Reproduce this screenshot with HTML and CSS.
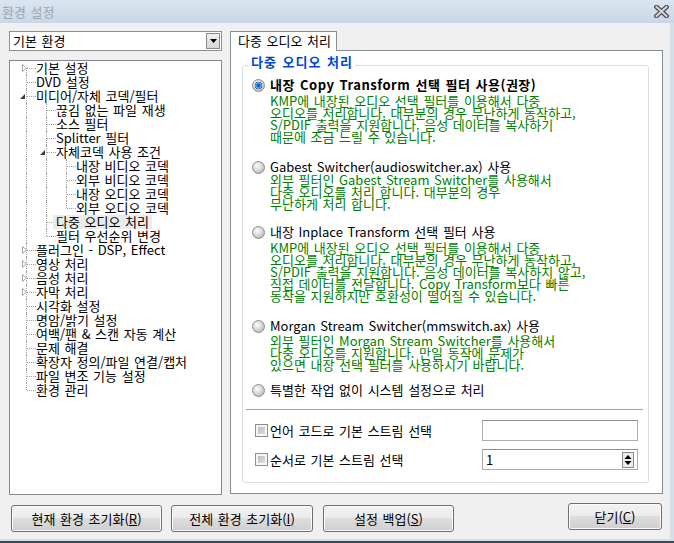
FILE: index.html
```html
<!DOCTYPE html>
<html lang="ko">
<head>
<meta charset="utf-8">
<title>환경 설정</title>
<link rel="stylesheet" href="styles.css">
</head>
<body>
<div class="window">
  <div class="titlebar">
    <span class="title">환경 설정</span>
    <svg class="close" width="15" height="13" viewBox="0 0 15 13"><path d="M2.5 2 L12.5 11 M12.5 2 L2.5 11" stroke="#505050" stroke-width="4.6" stroke-linecap="square"/><path d="M2.5 2 L12.5 11 M12.5 2 L2.5 11" stroke="#d6d6d6" stroke-width="2" stroke-linecap="square"/></svg>
  </div>
  <div class="client">
    <div class="main">
      <div class="leftcol">
        <div class="combo">
          <span>기본 환경</span>
          <span class="dd"><svg width="7" height="4" viewBox="0 0 7 4"><path d="M0 0 H7 L3.5 4 Z" fill="#000"/></svg></span>
        </div>
        <div class="tree">
          <div class="row"><span class="c first"><svg class="exp-c" width="5" height="8" viewBox="0 0 5 8"><path d="M0.5 0.5 L4.5 4 L0.5 7.5 Z" fill="#fff" stroke="#a6a6a6"/></svg></span><span class="lbl">기본 설정</span></div>
          <div class="row"><span class="c tee"></span><span class="lbl">DVD 설정</span></div>
          <div class="row"><span class="c tee"><svg class="exp-o" width="5" height="5" viewBox="0 0 5 5"><path d="M5 0 V5 H0 Z" fill="#3a3a3a"/></svg></span><span class="lbl">미디어/자체 코덱/필터</span></div>
          <div class="row"><span class="c pipe"></span><span class="c tee"></span><span class="lbl">끊김 없는 파일 재생</span></div>
          <div class="row"><span class="c pipe"></span><span class="c tee"></span><span class="lbl">소스 필터</span></div>
          <div class="row"><span class="c pipe"></span><span class="c tee"></span><span class="lbl">Splitter 필터</span></div>
          <div class="row"><span class="c pipe"></span><span class="c tee"><svg class="exp-o" width="5" height="5" viewBox="0 0 5 5"><path d="M5 0 V5 H0 Z" fill="#3a3a3a"/></svg></span><span class="lbl">자체코덱 사용 조건</span></div>
          <div class="row"><span class="c pipe"></span><span class="c pipe"></span><span class="c tee"></span><span class="lbl">내장 비디오 코덱</span></div>
          <div class="row"><span class="c pipe"></span><span class="c pipe"></span><span class="c tee"></span><span class="lbl">외부 비디오 코덱</span></div>
          <div class="row"><span class="c pipe"></span><span class="c pipe"></span><span class="c tee"></span><span class="lbl">내장 오디오 코덱</span></div>
          <div class="row"><span class="c pipe"></span><span class="c pipe"></span><span class="c ell"></span><span class="lbl">외부 오디오 코덱</span></div>
          <div class="row"><span class="c pipe"></span><span class="c tee"></span><span class="lbl sel">다중 오디오 처리</span></div>
          <div class="row"><span class="c pipe"></span><span class="c ell"></span><span class="lbl">필터 우선순위 변경</span></div>
          <div class="row"><span class="c tee"><svg class="exp-c" width="5" height="8" viewBox="0 0 5 8"><path d="M0.5 0.5 L4.5 4 L0.5 7.5 Z" fill="#fff" stroke="#a6a6a6"/></svg></span><span class="lbl">플러그인 - DSP, Effect</span></div>
          <div class="row"><span class="c tee"><svg class="exp-c" width="5" height="8" viewBox="0 0 5 8"><path d="M0.5 0.5 L4.5 4 L0.5 7.5 Z" fill="#fff" stroke="#a6a6a6"/></svg></span><span class="lbl">영상 처리</span></div>
          <div class="row"><span class="c tee"><svg class="exp-c" width="5" height="8" viewBox="0 0 5 8"><path d="M0.5 0.5 L4.5 4 L0.5 7.5 Z" fill="#fff" stroke="#a6a6a6"/></svg></span><span class="lbl">음성 처리</span></div>
          <div class="row"><span class="c tee"><svg class="exp-c" width="5" height="8" viewBox="0 0 5 8"><path d="M0.5 0.5 L4.5 4 L0.5 7.5 Z" fill="#fff" stroke="#a6a6a6"/></svg></span><span class="lbl">자막 처리</span></div>
          <div class="row"><span class="c tee"></span><span class="lbl">시각화 설정</span></div>
          <div class="row"><span class="c tee"></span><span class="lbl">명암/밝기 설정</span></div>
          <div class="row"><span class="c tee"></span><span class="lbl">여백/팬 &amp; 스캔 자동 계산</span></div>
          <div class="row"><span class="c tee"></span><span class="lbl">문제 해결</span></div>
          <div class="row"><span class="c tee"></span><span class="lbl">확장자 정의/파일 연결/캡처</span></div>
          <div class="row"><span class="c tee"></span><span class="lbl">파일 변조 기능 설정</span></div>
          <div class="row"><span class="c ell"></span><span class="lbl">환경 관리</span></div>
        </div>
      </div>
      <div class="rightcol">
        <div class="tabs"><div class="tab">다중 오디오 처리</div></div>
        <div class="panel">
          <div class="group">
            <span class="legend">다중 오디오 처리</span>
            <div class="opt"><span class="radio checked"></span><span class="lab bold">내장 Copy Transform 선택 필터 사용(권장)</span></div>
            <div class="desc d1"><div>KMP에 내장된 오디오 선택 필터를 이용해서 다중</div><div>오디오를 처리합니다. 대부분의 경우 무난하게 동작하고,</div><div>S/PDIF 출력을 지원합니다. 음성 데이터를 복사하기</div><div>때문에 조금 느릴 수 있습니다.</div></div>
            <div class="opt o2"><span class="radio"></span><span class="lab">Gabest Switcher(audioswitcher.ax) 사용</span></div>
            <div class="desc d2"><div>외부 필터인 Gabest Stream Switcher를 사용해서</div><div>다중 오디오를 처리 합니다. 대부분의 경우</div><div>무난하게 처리 합니다.</div></div>
            <div class="opt o3"><span class="radio"></span><span class="lab">내장 Inplace Transform 선택 필터 사용</span></div>
            <div class="desc d3"><div>KMP에 내장된 오디오 선택 필터를 이용해서 다중</div><div>오디오를 처리합니다. 대부분의 경우 무난하게 동작하고,</div><div>S/PDIF 출력을 지원합니다. 음성 데이터를 복사하지 않고,</div><div>직접 데이터를 전달합니다. Copy Transform보다 빠른</div><div>동작을 지원하지만 호환성이 떨어질 수 있습니다.</div></div>
            <div class="opt o4"><span class="radio"></span><span class="lab">Morgan Stream Switcher(mmswitch.ax) 사용</span></div>
            <div class="desc d4"><div>외부 필터인 Morgan Stream Switcher를 사용해서</div><div>다중 오디오를 지원합니다. 만일 동작에 문제가</div><div>있으면 내장 선택 필터를 사용하시기 바랍니다.</div></div>
            <div class="opt o5"><span class="radio"></span><span class="lab">특별한 작업 없이 시스템 설정으로 처리</span></div>
            <div class="sep"></div>
            <div class="chkrow"><span class="check"></span><span class="clab">언어 코드로 기본 스트림 선택</span><div class="edit"></div></div>
            <div class="chkrow c2"><span class="check"></span><span class="clab">순서로 기본 스트림 선택</span><div class="edit"><span>1</span><svg class="spin" width="12" height="16" viewBox="0 0 12 16"><rect x="0.5" y="0.5" width="11" height="15" fill="#ececec" stroke="#8a8a8a"/><path d="M2.5 7 L6 3 L9.5 7 Z" fill="#000"/><path d="M2.5 9 L6 13 L9.5 9 Z" fill="#000"/></svg></div></div>
          </div>
        </div>
      </div>
    </div>
    <div class="footer">
      <button class="btn b1">현재 환경 초기화(<u>R</u>)</button>
      <button class="btn b2">전체 환경 초기화(<u>I</u>)</button>
      <button class="btn b3">설정 백업(<u>S</u>)</button>
      <button class="btn b4">닫기(<u>C</u>)</button>
    </div>
  </div>
  <div class="bottomframe"></div>
</div>
</body>
</html>
```

FILE: styles.css
```css
* { box-sizing: border-box; }
html, body { margin: 0; padding: 0; }
body {
  width: 674px;
  height: 543px;
  overflow: hidden;
  font-family: "Noto Sans CJK KR", sans-serif;
  font-size: 13px;
  word-spacing: 1px;
  color: #000;
  background: #f0f0f0;
}
.window { width: 674px; height: 543px; display: flex; flex-direction: column; }
.titlebar {
  height: 23px;
  flex: none;
  background: linear-gradient(#dbe5f0, #c8d7e7);
  display: flex;
  align-items: center;
  justify-content: space-between;
  padding: 0 5px 0 2px;
}
.title { color: #9ca5af; line-height: 14px; }
.close { display: block; }
.client {
  flex: 1;
  display: flex;
  flex-direction: column;
  background: #f0f0f0;
  border-right: 4px solid #d5dfea;
}
.bottomframe { height: 4px; flex: none; background: #d5dfea; border-bottom: 2px solid #3e4854; }

.main { display: flex; margin: 8px 0 0 9px; height: 464px; }
.leftcol { width: 213px; display: flex; flex-direction: column; gap: 9px; }
.combo {
  height: 20px;
  border: 1px solid #8e8f8f;
  background: #fff;
  display: flex;
  align-items: center;
  justify-content: space-between;
  padding: 0 1px 0 3px;
  line-height: 14px;
}
.dd {
  width: 14px;
  height: 16px;
  border: 1px solid #8a8a8a;
  background: linear-gradient(#f0f0f0, #d6d6d6);
  display: flex;
  align-items: center;
  justify-content: center;
}
.dd svg { display: block; }
.tree {
  height: 435px;
  border: 1px solid #828790;
  background: #fff;
  padding: 0 0 0 6px;
}
.row { height: 14px; display: flex; align-items: center; }
.c { width: 20px; height: 14px; position: relative; flex: none; }
.c::before, .c::after { content: ""; position: absolute; }
.pipe::before, .tee::before { left: 10px; top: 0; bottom: 0; border-left: 1px dotted #a0a0a0; }
.ell::before { left: 10px; top: 0; height: 7px; border-left: 1px dotted #a0a0a0; }
.first::before { left: 10px; top: 7px; bottom: 0; border-left: 1px dotted #a0a0a0; }
.tee::after, .ell::after, .first::after { left: 11px; right: 0; top: 7px; border-top: 1px dotted #a0a0a0; }
.exp-c { position: absolute; left: 6px; top: 3px; z-index: 1; display: block; }
.exp-o { position: absolute; left: 4px; top: 5px; z-index: 1; display: block; }
.lbl { height: 14px; line-height: 14px; padding: 0 3px; margin-left: -3px; white-space: nowrap; position: relative; z-index: 1; }
.lbl.sel { background: #ebebeb; }

.rightcol { width: 433px; margin-left: 8px; display: flex; flex-direction: column; }
.tabs { display: flex; height: 20px; position: relative; z-index: 1; }
.tab {
  width: 107px;
  height: 20px;
  border: 1px solid #898c95;
  border-bottom: none;
  background: #fff;
  padding-left: 7px;
  line-height: 18px;
  white-space: nowrap;
}
.panel {
  height: 444px;
  margin-top: -1px;
  border: 1px solid #898c95;
  background: #fff;
  padding: 14px 13px 0 11px;
}
.group {
  height: 418px;
  border: 1px solid #d5dfe5;
  border-radius: 3px;
  position: relative;
  padding: 12px 0 0 0;
}
.legend {
  position: absolute;
  left: 6px;
  top: -11px;
  padding: 0 2px;
  background: #fff;
  color: #0046d5;
  font-weight: bold;
  letter-spacing: 1px;
  line-height: 14px;
}
.opt { height: 14px; display: flex; align-items: center; padding-left: 9px; }
.lab { margin-left: 5px; line-height: 14px; white-space: nowrap; }
.bold { font-weight: bold; letter-spacing: 0.5px; }
.radio {
  width: 13px;
  height: 13px;
  flex: none;
  border-radius: 50%;
  border: 1px solid #8b8b8b;
  background: radial-gradient(circle at 40% 35%, #fdfdfd 0, #e2e2e2 35%, #c2c2c2 70%, #dcdcdc 100%);
}
.radio.checked {
  background:
    radial-gradient(circle at 50% 50%, #0f3f86 0, #2a75c9 1.6px, #6fb3ee 2.8px, #2b6cb8 3.6px, rgba(0,0,0,0) 4.1px),
    radial-gradient(circle at 40% 35%, #fdfdfd 0, #e2e2e2 35%, #c2c2c2 70%, #dcdcdc 100%);
}
.desc { margin-left: 27px; color: #008000; white-space: nowrap; }
.desc > div { height: 12px; line-height: 12px; }
.d1 { margin-top: 3px; }
.o2 { margin-top: 17px; }
.d2 { margin-top: 0; }
.o3 { margin-top: 15px; }
.d3 { margin-top: 3px; }
.o4 { margin-top: 17px; }
.d4 { margin-top: 2px; }
.o5 { margin-top: 12px; }
.sep { height: 1px; background: #a0a0a0; margin: 12px 5px 0 3px; }
.chkrow { display: flex; align-items: center; height: 21px; margin-top: 10px; padding-left: 12px; }
.chkrow.c2 { margin-top: 8px; }
.check {
  width: 13px;
  height: 13px;
  flex: none;
  border: 1px solid #8f8f8f;
  background: linear-gradient(135deg, #b4b4b4, #e8e8e8);
  box-shadow: inset 0 0 0 2px #f6f6f6;
}
.clab { margin-left: 2px; line-height: 14px; white-space: nowrap; }
.edit {
  margin-left: auto;
  margin-right: 10px;
  width: 156px;
  height: 21px;
  border: 1px solid #abadb3;
  border-top-color: #8e8f8f;
  background: #fff;
  display: flex;
  align-items: center;
  justify-content: space-between;
  padding: 0 3px 0 3px;
  line-height: 14px;
}
.spin { display: block; }

.footer { display: flex; align-items: flex-start; padding: 8px 8px 0 11px; }
.btn {
  height: 27px;
  margin-top: 2px;
  border: 1px solid #707070;
  border-radius: 3px;
  background: linear-gradient(#f2f2f2 0%, #ebebeb 50%, #dddddd 50%, #cfcfcf 100%);
  box-shadow: inset 0 0 0 1px #fbfbfb;
  font-family: "Noto Sans CJK KR", sans-serif;
  font-size: 13px;
  word-spacing: 1px;
  color: #000;
  display: flex;
  align-items: center;
  justify-content: center;
  padding: 0;
  line-height: 14px;
}
.b1 { width: 151px; }
.b2 { width: 142px; margin-left: 9px; }
.b3 { width: 131px; margin-left: 10px; }
.b4 { width: 94px; margin-left: auto; margin-top: 0; }
```
